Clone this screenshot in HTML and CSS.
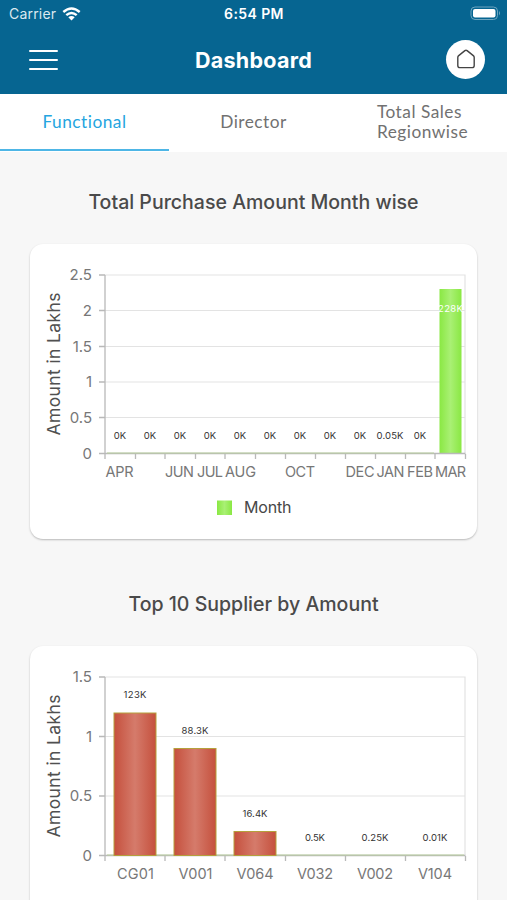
FILE: index.html
```html
<!DOCTYPE html>
<html lang="en">

<head>
    <meta charset="UTF-8">
    <meta name="viewport" content="width=device-width, initial-scale=1.0">
    <title>Dashboard</title>
    <link rel="stylesheet" href="styles.css">
</head>

<body>
    <header class="header">
        <div class="status-bar">
            <div class="carrier">
                <span>Carrier</span>
                <svg class="wifi" width="19" height="14" viewBox="0 0 19 14">
                    <path d="M1.3 5 Q9.5 -2.2 17.7 5" />
                    <path d="M4.3 8.2 Q9.5 3.6 14.7 8.2" />
                    <path class="dot" d="M6.3 10.3 Q9.5 7.7 12.7 10.3 L9.5 13.6 Z" />
                </svg>
            </div>
            <span class="clock">6:54 PM</span>
            <svg class="battery" width="31" height="15" viewBox="0 0 31 15">
                <rect class="shell" x="1" y="1" width="26.5" height="12.5" rx="4" />
                <rect class="charge" x="3" y="3" width="22.5" height="8.5" rx="2" />
                <path class="tip" d="M29 5 Q31 7.2 29 9.5 Z" />
            </svg>
        </div>
        <div class="nav-bar">
            <button class="menu">
                <span></span>
                <span></span>
                <span></span>
            </button>
            <h1>Dashboard</h1>
            <button class="home">
                <svg width="20" height="22" viewBox="0 0 20 22">
                    <path d="M1.8 8.4 Q1.8 7.3 2.7 6.6 L8.9 1.6 Q10 0.8 11.1 1.6 L17.3 6.6 Q18.2 7.3 18.2 8.4 V16.4 Q18.2 18.6 16 18.6 H4 Q1.8 18.6 1.8 16.4 Z" />
                </svg>
            </button>
        </div>
    </header>

    <nav class="tabs">
        <div class="tab active">Functional</div>
        <div class="tab">Director</div>
        <div class="tab"><span>Total Sales<br>Regionwise</span></div>
    </nav>

    <main class="content">
        <section>
            <h2>Total Purchase Amount Month wise</h2>
            <div class="card">
                <svg class="chart" width="447" height="295" viewBox="0 0 447 295">
                    <defs>
                        <linearGradient id="green">
                            <stop offset="0" stop-color="#8ae843" />
                            <stop offset="0.5" stop-color="#a9f074" />
                            <stop offset="1" stop-color="#8ae843" />
                        </linearGradient>
                    </defs>
                    <path class="grid" d="M75 31H435V209M75 66.5H435M75 102.5H435M75 138H435M75 173.5H435" />
                    <rect x="409.5" y="45" width="22" height="164.5" fill="url(#green)" />
                    <path class="axis" d="M75 31V215M69 31H75M69 66.5H75M69 102.5H75M69 138H75M69 173.5H75M69 209.5H435.5" />
                    <path class="axis" d="M105.5 210V215M135 210V215M165.5 210V215M195 210V215M225.5 210V215M255.5 210V215M285.5 210V215M315.5 210V215M345.5 210V215M375.5 210V215M405 210V215M435.5 210V215" />
                    <path class="zero-line" d="M77 209H404" />
                    <g class="y-labels">
                        <text x="62" y="36">2.5</text>
                        <text x="62" y="72">2</text>
                        <text x="62" y="107.5">1.5</text>
                        <text x="62" y="143">1</text>
                        <text x="62" y="179">0.5</text>
                        <text x="62" y="214.5">0</text>
                    </g>
                    <text class="y-title" transform="translate(30 120) rotate(-90)" textLength="143">Amount in Lakhs</text>
                    <g class="values">
                        <text x="90" y="195">0K</text>
                        <text x="120" y="195">0K</text>
                        <text x="150" y="195">0K</text>
                        <text x="180" y="195">0K</text>
                        <text x="210" y="195">0K</text>
                        <text x="240" y="195">0K</text>
                        <text x="270" y="195">0K</text>
                        <text x="300" y="195">0K</text>
                        <text x="330" y="195">0K</text>
                        <text x="360" y="195" textLength="27">0.05K</text>
                        <text x="390" y="195">0K</text>
                        <text class="inside" x="420.5" y="67.5" textLength="25">228K</text>
                    </g>
                    <g class="x-labels">
                        <text x="89.5" y="232.5" textLength="28">APR</text>
                        <text x="149.5" y="232.5" textLength="29">JUN</text>
                        <text x="180" y="232.5" textLength="26">JUL</text>
                        <text x="210.5" y="232.5" textLength="31">AUG</text>
                        <text x="270" y="232.5" textLength="30">OCT</text>
                        <text x="330" y="232.5" textLength="29">DEC</text>
                        <text x="360.5" y="232.5" textLength="28">JAN</text>
                        <text x="390" y="232.5" textLength="26">FEB</text>
                        <text x="420.5" y="232.5" textLength="31">MAR</text>
                    </g>
                    <rect x="187" y="256.5" width="15" height="14.5" fill="url(#green)" />
                    <text class="legend" x="214" y="269" textLength="47.5">Month</text>
                </svg>
            </div>
        </section>

        <section>
            <h2>Top 10 Supplier by Amount</h2>
            <div class="card">
                <svg class="chart" width="447" height="295" viewBox="0 0 447 295">
                    <defs>
                        <linearGradient id="red">
                            <stop offset="0" stop-color="#c5503d" />
                            <stop offset="0.5" stop-color="#d57b6b" />
                            <stop offset="1" stop-color="#c5503d" />
                        </linearGradient>
                    </defs>
                    <path class="grid" d="M75 31H435V209M75 90.5H435M75 150H435" />
                    <path class="axis" d="M75 31V215M69 31H75M69 90.5H75M69 150H75M69 209.5H435.5" />
                    <path class="axis" d="M135 210V215M195 210V215M255.5 210V215M315.5 210V215M375.5 210V215M435.5 210V215" />
                    <path class="zero-line" d="M77 209H434" />
                    <g class="bars">
                        <rect x="84" y="67" width="42" height="142.5" />
                        <rect x="144" y="102.5" width="42" height="107" />
                        <rect x="204" y="185.5" width="42" height="24" />
                    </g>
                    <g class="y-labels">
                        <text x="62" y="36">1.5</text>
                        <text x="62" y="95.5">1</text>
                        <text x="62" y="155">0.5</text>
                        <text x="62" y="214.5">0</text>
                    </g>
                    <text class="y-title" transform="translate(30 120) rotate(-90)" textLength="143">Amount in Lakhs</text>
                    <g class="values">
                        <text x="105" y="52" textLength="23">123K</text>
                        <text x="165" y="87.5" textLength="27">88.3K</text>
                        <text x="225" y="171" textLength="25">16.4K</text>
                        <text x="285" y="194.5" textLength="20">0.5K</text>
                        <text x="345" y="194.5" textLength="27">0.25K</text>
                        <text x="405" y="194.5" textLength="25">0.01K</text>
                    </g>
                    <g class="x-labels">
                        <text x="105.5" y="232.5" textLength="37">CG01</text>
                        <text x="165.5" y="232.5" textLength="34">V001</text>
                        <text x="225" y="232.5" textLength="37">V064</text>
                        <text x="285" y="232.5" textLength="36">V032</text>
                        <text x="345" y="232.5" textLength="36">V002</text>
                        <text x="405" y="232.5" textLength="34">V104</text>
                    </g>
                </svg>
            </div>
        </section>
    </main>
</body>

</html>
```

FILE: styles.css
```css
* {
    margin: 0;
    padding: 0;
    box-sizing: border-box;
}

body {
    height: 900px;
    overflow: hidden;
    background-color: #f7f7f7;
    font-family: Inter, sans-serif;
}

.header {
    height: 94px;
    background-color: #066591;
    color: white;
}

.status-bar {
    height: 27px;
    padding: 0 6px 0 9px;
    display: grid;
    grid-template-columns: 1fr auto 1fr;
    align-items: center;
    font-size: 14px;
}

.carrier {
    display: flex;
    align-items: center;
    gap: 6px;
    letter-spacing: 0.2px;
    color: #dbe9f0;
}

.wifi path {
    fill: none;
    stroke: white;
    stroke-width: 2.4;
}

.wifi .dot {
    fill: white;
    stroke: none;
}

.clock {
    margin-right: 2px;
    font-weight: 600;
    letter-spacing: 0.4px;
}

.battery {
    justify-self: end;
}

.shell {
    fill: none;
    stroke: #6da5bf;
}

.charge {
    fill: white;
}

.tip {
    fill: #6da5bf;
}

.nav-bar {
    height: 65px;
    padding: 0 22px;
    display: grid;
    grid-template-columns: 1fr auto 1fr;
    align-items: center;
}

.nav-bar h1 {
    font-size: 21.5px;
    font-weight: 700;
    letter-spacing: 0.25px;
}

.menu {
    width: 29px;
    margin-left: 7px;
    display: flex;
    flex-direction: column;
    gap: 7px;
    border: none;
    background: none;
}

.menu span {
    height: 2px;
    border-radius: 1px;
    background-color: white;
}

.home {
    width: 39px;
    height: 39px;
    justify-self: end;
    display: flex;
    justify-content: center;
    align-items: center;
    border: none;
    border-radius: 50%;
    background-color: white;
}

.home path {
    fill: none;
    stroke: #444;
    stroke-width: 1.4;
}

.tabs {
    height: 58px;
    display: flex;
    background-color: white;
}

.tab {
    width: 169px;
    padding-bottom: 3px;
    flex-grow: 1;
    display: flex;
    justify-content: center;
    align-items: center;
    font-family: Lato, sans-serif;
    font-size: 17.3px;
    line-height: 19.5px;
    letter-spacing: 0.5px;
    color: #717171;
}

.tab.active {
    height: 57px;
    padding-bottom: 0;
    border-bottom: 2px solid #4eb6e6;
    color: #25a5e0;
}

.content {
    padding: 0 30px;
}

.content h2 {
    height: 92px;
    padding-top: 8px;
    display: flex;
    justify-content: center;
    align-items: center;
    font-size: 19.55px;
    font-weight: 500;
    color: #4a4a4a;
    white-space: nowrap;
}

.card {
    height: 295px;
    border-radius: 13px;
    background-color: white;
    box-shadow: 0 1px 2px rgba(0, 0, 0, 0.25);
}

section + section {
    margin-top: 15px;
}

.chart {
    display: block;
}

.chart text {
    font-family: Inter, sans-serif;
}

.grid {
    fill: none;
    stroke: #e3e3e3;
    stroke-width: 1.2;
}

.axis {
    fill: none;
    stroke: #b9b9b9;
    stroke-width: 1.3;
}

.zero-line {
    stroke: #b9cf9f;
}

.bars rect {
    fill: url(#red);
    stroke: #b5a03c;
}

.y-labels {
    font-size: 15px;
    fill: #777;
    text-anchor: end;
}

.x-labels {
    font-size: 14.5px;
    fill: #777;
    text-anchor: middle;
}

.y-title {
    font-size: 17.5px;
    fill: #505050;
    text-anchor: middle;
}

.values {
    font-size: 9.5px;
    fill: #333;
    text-anchor: middle;
}

.values .inside {
    fill: white;
}

.legend {
    font-size: 16px;
    fill: #474747;
}
```
